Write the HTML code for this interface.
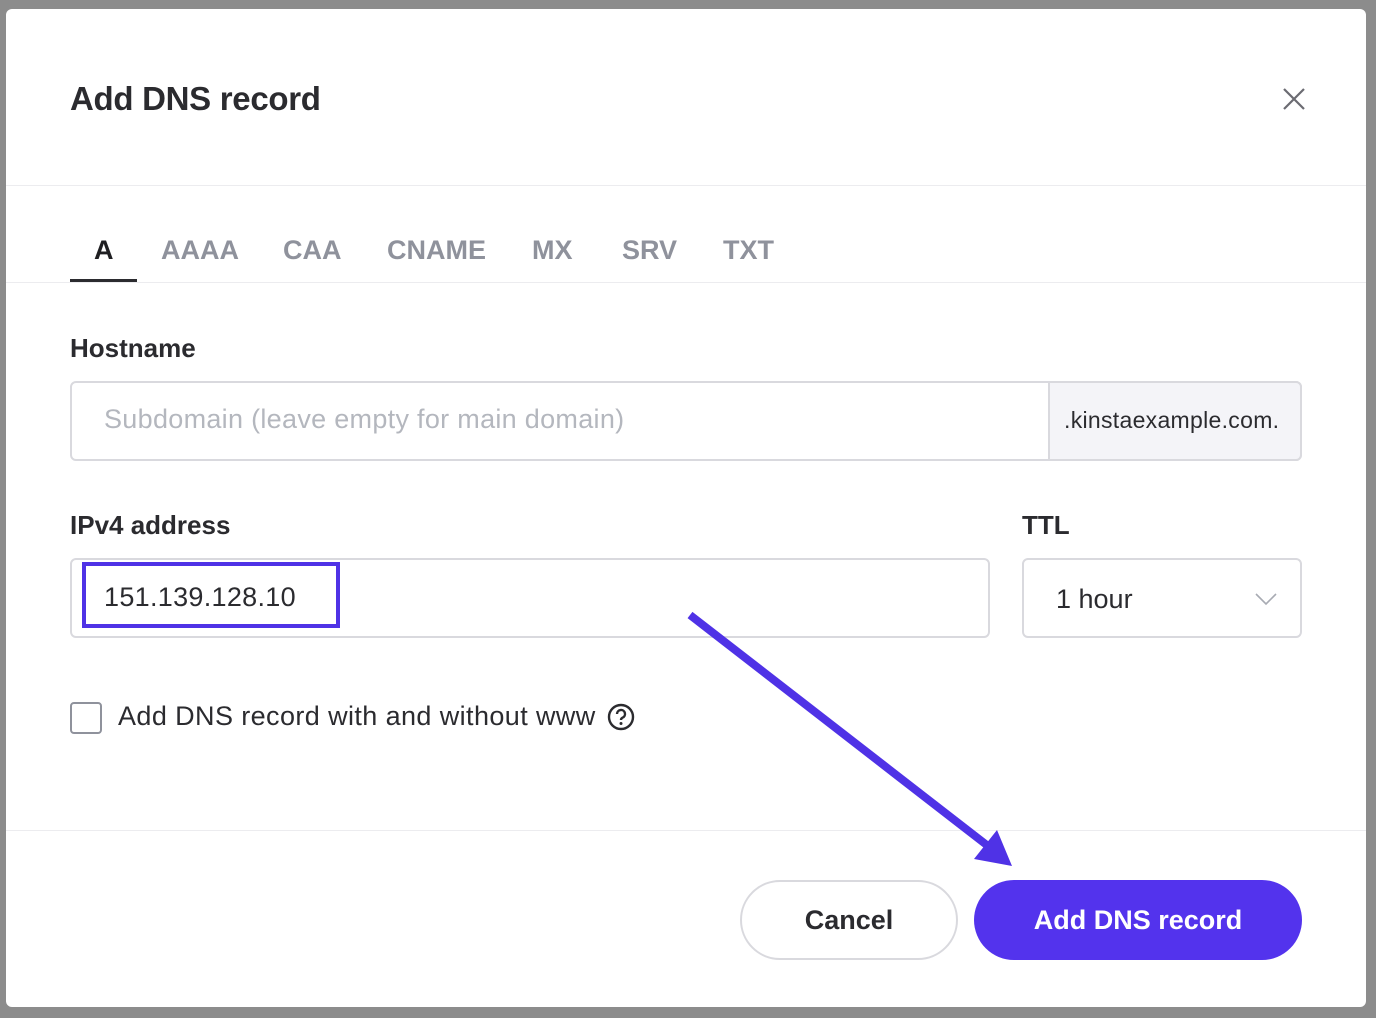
<!DOCTYPE html>
<html><head><meta charset="utf-8"><style>
*{box-sizing:border-box;margin:0;padding:0}
body{width:1376px;height:1018px;background:#8c8c8c;position:relative;overflow:hidden;font-family:"Liberation Sans",sans-serif;color:#1f1f22}
.modal{position:absolute;left:6px;top:9px;width:1360px;height:998px;background:#fff;border-radius:6px}
.abs{position:absolute}
.title{left:64px;top:71px;font-size:33px;font-weight:bold;color:#2b2b2f;letter-spacing:-0.3px}
.hr{position:absolute;left:0;width:1360px;height:1px;background:#ececef}
.tab{position:absolute;top:226px;font-size:27px;font-weight:bold;color:#8f929c}
.label{position:absolute;font-size:26px;font-weight:bold;color:#2b2b2f}
.input{position:absolute;border:2px solid #d9d9de;border-radius:6px;background:#fff}
</style></head><body>
<div class="modal">
<div class="abs title">Add DNS record</div>
<svg class="abs" style="left:1276px;top:78px" width="24" height="24" viewBox="0 0 24 24"><path d="M2 2L22 22M22 2L2 22" stroke="#6b6b72" stroke-width="2.2" fill="none"/></svg>
<div class="hr" style="top:176px"></div>
<div class="tab" style="left:88px;color:#1f1f22">A</div>
<div class="abs" style="left:64px;top:270px;width:67px;height:3px;background:#2b2b2f"></div>
<div class="tab" style="left:155px">AAAA</div>
<div class="tab" style="left:277px">CAA</div>
<div class="tab" style="left:381px">CNAME</div>
<div class="tab" style="left:526px">MX</div>
<div class="tab" style="left:616px">SRV</div>
<div class="tab" style="left:717px">TXT</div>
<div class="hr" style="top:273px"></div>
<div class="label" style="left:64px;top:324px">Hostname</div>
<div class="input" style="left:64px;top:372px;width:1232px;height:80px"></div>
<div class="abs" style="left:1042px;top:372px;width:254px;height:80px;background:#f4f4f8;border:2px solid #d9d9de;border-radius:0 6px 6px 0"></div>
<div class="abs" style="left:98px;top:395px;font-size:27px;letter-spacing:0.3px;color:#b4b7be">Subdomain (leave empty for main domain)</div>
<div class="abs" style="left:1058px;top:398px;font-size:23px;letter-spacing:0.3px;color:#2b2b2f">.kinstaexample.com.</div>
<div class="label" style="left:64px;top:501px">IPv4 address</div>
<div class="label" style="left:1016px;top:501px">TTL</div>
<div class="input" style="left:64px;top:549px;width:920px;height:80px"></div>
<div class="abs" style="left:76px;top:553px;width:258px;height:66px;border:4px solid #4f32e6"></div>
<div class="abs" style="left:98px;top:573px;font-size:27px;letter-spacing:0.3px;color:#2b2b2f">151.139.128.10</div>
<div class="input" style="left:1016px;top:549px;width:280px;height:80px"></div>
<div class="abs" style="left:1050px;top:575px;font-size:27px;color:#2b2b2f">1 hour</div>
<svg class="abs" style="left:1249px;top:583px" width="22" height="14" viewBox="0 0 22 14"><path d="M1 2L11 12L21 2" stroke="#a8abb3" stroke-width="1.6" fill="none"/></svg>
<div class="abs" style="left:64px;top:693px;width:32px;height:32px;border:2px solid #8f929c;border-radius:4px"></div>
<div class="abs" style="left:112px;top:692px;font-size:27px;letter-spacing:0.4px;color:#2b2b2f">Add DNS record with and without www</div>
<svg class="abs" style="left:601px;top:694px" width="28" height="28" viewBox="0 0 28 28"><circle cx="14" cy="14" r="12" stroke="#2b2b2f" stroke-width="2.4" fill="none"/><path d="M10 11a4 4 0 1 1 5.5 3.7c-1 .5-1.5 1.2-1.5 2.3" stroke="#2b2b2f" stroke-width="2.4" fill="none"/><circle cx="14" cy="20.5" r="1.5" fill="#2b2b2f"/></svg>
<div class="hr" style="top:821px"></div>
<div class="abs" style="left:734px;top:871px;width:218px;height:80px;border:2px solid #d9d9de;border-radius:40px;text-align:center;line-height:76px;font-size:27px;font-weight:bold;color:#2b2b2f">Cancel</div>
<div class="abs" style="left:968px;top:871px;width:328px;height:80px;background:#5333ed;border-radius:40px;text-align:center;line-height:80px;font-size:27px;font-weight:bold;color:#fff">Add DNS record</div>
</div>
<svg class="abs" style="left:0;top:0" width="1376" height="1018"><line x1="690" y1="615" x2="988" y2="846" stroke="#4f32e6" stroke-width="8"/><polygon points="1012,866 997,830 974,859" fill="#4f32e6"/></svg>
</body></html>
